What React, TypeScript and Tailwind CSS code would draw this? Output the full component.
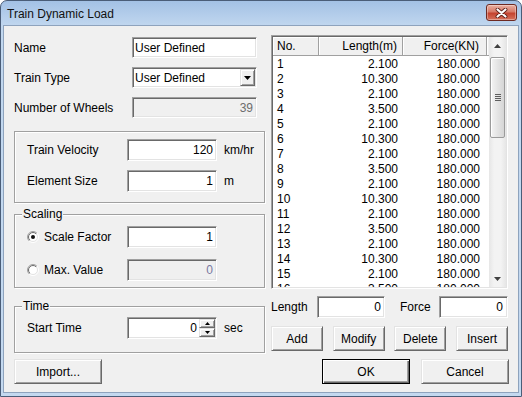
import React from "react";

const sunken =
  "border border-t-[#a0a0a0] border-l-[#a0a0a0] border-b-white border-r-white shadow-[inset_1px_1px_0_#696969,inset_-1px_-1px_0_#e3e3e3]";
const raised =
  "border border-t-[#e3e3e3] border-l-[#e3e3e3] border-b-[#696969] border-r-[#696969] shadow-[inset_1px_1px_0_#fff,inset_-1px_-1px_0_#a0a0a0] bg-[#f0f0f0]";
const etched = "border border-[#a0a0a0] shadow-[inset_1px_1px_0_#fff,1px_1px_0_#fff]";

const rows: [string, string][] = [
  ["1", "2.100"],
  ["2", "10.300"],
  ["3", "2.100"],
  ["4", "3.500"],
  ["5", "2.100"],
  ["6", "10.300"],
  ["7", "2.100"],
  ["8", "3.500"],
  ["9", "2.100"],
  ["10", "10.300"],
  ["11", "2.100"],
  ["12", "3.500"],
  ["13", "2.100"],
  ["14", "10.300"],
  ["15", "2.100"],
  ["16", "3.500"],
];

function Radio({ checked }: { checked: boolean }) {
  return (
    <svg width="12" height="12" viewBox="0 0 12 12" className="shrink-0">
      <defs>
        <linearGradient id="ro" x1="0" y1="0" x2="1" y2="1">
          <stop offset="0.5" stopColor="#a0a0a0" />
          <stop offset="0.5" stopColor="#ffffff" />
        </linearGradient>
        <linearGradient id="ri" x1="0" y1="0" x2="1" y2="1">
          <stop offset="0.5" stopColor="#696969" />
          <stop offset="0.5" stopColor="#e3e3e3" />
        </linearGradient>
      </defs>
      <circle cx="6" cy="6" r="5.5" fill="none" stroke="url(#ro)" strokeWidth="1" />
      <circle cx="6" cy="6" r="4.5" fill="#fff" stroke="url(#ri)" strokeWidth="1" />
      {checked && <circle cx="6" cy="6" r="2" fill="#111" />}
    </svg>
  );
}

function Tri({ down = true, color = "#000" }: { down?: boolean; color?: string }) {
  return (
    <svg width="7" height="4" viewBox="0 0 7 4">
      {down ? <polygon points="0,0 7,0 3.5,4" fill={color} /> : <polygon points="0,4 7,4 3.5,0" fill={color} />}
    </svg>
  );
}

function Btn({ children, w, def = false }: { children: React.ReactNode; w: string; def?: boolean }) {
  if (def) {
    return (
      <div
        className={`${w} h-[25px] border border-black bg-[#f0f0f0] shadow-[inset_1px_1px_0_#fff,inset_-1px_-1px_0_#696969,inset_-2px_-2px_0_#a0a0a0] flex items-center justify-center`}
      >
        {children}
      </div>
    );
  }
  return <div className={`${w} h-[25px] ${raised} flex items-center justify-center`}>{children}</div>;
}

function GroupRow({ label, value, unit }: { label: string; value: string; unit: string }) {
  return (
    <div className="flex items-center h-[22px]">
      <span className="w-[100px]">{label}</span>
      <div className={`w-[90px] h-[22px] bg-white ${sunken} flex items-center justify-end pr-[3px]`}>{value}</div>
      <span className="ml-[7px]">{unit}</span>
    </div>
  );
}

export default function App() {
  return (
    <div className="w-[522px] h-[397px] font-['Liberation_Sans',Arial,sans-serif] text-[12px] text-black leading-[14px]">
      <div className="w-full h-full flex flex-col rounded-t-[7px] border border-[#4a5d78] overflow-hidden bg-[linear-gradient(#a3c1e5,#c1d7ef_25px,#c4d9f0)]">
        {/* Title bar */}
        <div className="h-[24px] shrink-0 flex items-start pl-[6px] pr-[4px]">
          <span className="mt-[6px] text-[#111]">Train Dynamic Load</span>
          <div className="ml-auto mt-[3px] w-[31px] h-[17px] rounded-[3px] border border-[#6e2a22] bg-[linear-gradient(#eab0a2,#d67a68_45%,#c4432f_55%,#d5725c)] shadow-[inset_0_0_0_1px_rgba(255,255,255,0.35)] flex items-center justify-center">
            <svg width="13" height="10" viewBox="0 0 13 10">
              <path d="M2.5 1.5 L10.5 8.5 M10.5 1.5 L2.5 8.5" stroke="#5a1d16" strokeWidth="3.8" strokeLinecap="round" />
              <path d="M2.5 1.5 L10.5 8.5 M10.5 1.5 L2.5 8.5" stroke="#fff" strokeWidth="2.2" strokeLinecap="round" />
            </svg>
          </div>
        </div>

        {/* Client area */}
        <div className="flex-1 mx-[2px] mb-[3px] border border-[#8ea3bd] bg-[#f0f0f0] flex flex-col pl-[10px] pt-[9px]">
          <div className="flex items-start gap-[6px]">
            {/* Left column */}
            <div className="w-[251px] pt-[2px] flex flex-col">
              <div className="flex items-center h-[21px]">
                <span className="w-[118px]">Name</span>
                <div className={`w-[125px] h-[21px] bg-white ${sunken} flex items-center pl-[2px]`}>User Defined</div>
              </div>
              <div className="flex items-center h-[21px] mt-[9px]">
                <span className="w-[118px]">Train Type</span>
                <div className={`w-[125px] h-[21px] bg-white ${sunken} flex items-center pl-[2px]`}>
                  <span className="flex-1">User Defined</span>
                  <div className={`w-[15px] h-[17px] mr-[1px] ${raised} flex items-center justify-center`}>
                    <Tri />
                  </div>
                </div>
              </div>
              <div className="flex items-center h-[21px] mt-[9px]">
                <span className="w-[118px]">Number of Wheels</span>
                <div className={`w-[125px] h-[21px] bg-[#f0f0f0] ${sunken} flex items-center justify-end pr-[3px] text-[#6d6d6d]`}>
                  39
                </div>
              </div>

              <div className={`mt-[13px] h-[72px] ${etched} pl-[12px] pt-[7px] flex flex-col`}>
                <GroupRow label="Train Velocity" value="120" unit="km/hr" />
                <div className="h-[9px]" />
                <GroupRow label="Element Size" value="1" unit="m" />
              </div>

              <div className={`relative mt-[11px] h-[74px] ${etched} pl-[12px] pt-[11px] flex flex-col`}>
                <span className="absolute left-[7px] -top-[8px] px-[1px] bg-[#f0f0f0]">Scaling</span>
                <div className="flex items-center h-[22px]">
                  <div className="w-[100px] flex items-center">
                    <Radio checked />
                    <span className="ml-[5px]">Scale Factor</span>
                  </div>
                  <div className={`w-[90px] h-[22px] bg-white ${sunken} flex items-center justify-end pr-[3px]`}>1</div>
                </div>
                <div className="flex items-center h-[22px] mt-[11px]">
                  <div className="w-[100px] flex items-center">
                    <Radio checked={false} />
                    <span className="ml-[5px]">Max. Value</span>
                  </div>
                  <div className={`w-[90px] h-[22px] bg-[#f0f0f0] ${sunken} flex items-center justify-end pr-[3px] text-[#7878a0]`}>
                    0
                  </div>
                </div>
              </div>

              <div className={`relative mt-[18px] h-[47px] ${etched} pl-[12px] pt-[10px] flex flex-col`}>
                <span className="absolute left-[7px] -top-[8px] px-[1px] bg-[#f0f0f0]">Time</span>
                <div className="flex items-center h-[22px]">
                  <span className="w-[100px]">Start Time</span>
                  <div className={`w-[90px] h-[22px] bg-white ${sunken} flex items-center justify-end`}>
                    <span className="mr-[2px]">0</span>
                    <div className="flex flex-col w-[16px] h-[18px] mr-[1px]">
                      <div className={`h-[9px] ${raised} flex items-center justify-center`}>
                        <svg width="5" height="3" viewBox="0 0 5 3">
                          <polygon points="0,3 5,3 2.5,0" fill="#000" />
                        </svg>
                      </div>
                      <div className={`h-[9px] ${raised} flex items-center justify-center`}>
                        <svg width="5" height="3" viewBox="0 0 5 3">
                          <polygon points="0,0 5,0 2.5,3" fill="#000" />
                        </svg>
                      </div>
                    </div>
                  </div>
                  <span className="ml-[7px]">sec</span>
                </div>
              </div>
            </div>

            {/* Right column */}
            <div className="w-[237px] flex flex-col">
              <div className={`h-[254px] bg-white ${sunken} p-[1px] flex overflow-hidden`}>
                <div className="w-[216px] flex flex-col overflow-hidden">
                  <div className="h-[19px] shrink-0 flex bg-[#f0f0f0]">
                    <div className="w-[46px] h-full border-r border-b border-[#a0a0a0] shadow-[inset_1px_1px_0_#fff] flex items-center pl-[4px]">
                      No.
                    </div>
                    <div className="w-[84px] h-full border-r border-b border-[#a0a0a0] shadow-[inset_1px_1px_0_#fff] flex items-center justify-end pr-[5px]">
                      Length(m)
                    </div>
                    <div className="w-[84px] h-full border-r border-b border-[#a0a0a0] shadow-[inset_1px_1px_0_#fff] flex items-center justify-end pr-[7px]">
                      Force(KN)
                    </div>
                    <div className="flex-1 h-full border-b border-[#a0a0a0] shadow-[inset_1px_1px_0_#fff]" />
                  </div>
                  {rows.map(([n, l]) => (
                    <div key={n} className="h-[15px] shrink-0 flex items-center">
                      <span className="w-[46px] pl-[4px]">{n}</span>
                      <span className="w-[84px] text-right pr-[5px]">{l}</span>
                      <span className="w-[84px] text-right pr-[7px]">180.000</span>
                    </div>
                  ))}
                </div>
                {/* scrollbar */}
                <div className="w-[17px] flex flex-col bg-[linear-gradient(90deg,#e6e6e6,#f3f3f3_30%,#f3f3f3_70%,#e6e6e6)]">
                  <div className="h-[17px] flex items-center justify-center">
                    <Tri down={false} color="#404040" />
                  </div>
                  <div className="flex-1 relative">
                    <div className="mx-[1px] mt-[3px] h-[81px] rounded-[2px] border border-[#9b9b9b] bg-[linear-gradient(90deg,#f4f4f4,#e4e4e4_50%,#d6d6d6)] shadow-[inset_1px_1px_0_#fff] flex flex-col items-center justify-center gap-[1px]">
                      <div className="w-[6px] h-[1px] bg-[#5e5e5e]" />
                      <div className="w-[6px] h-[1px] bg-[#5e5e5e]" />
                      <div className="w-[6px] h-[1px] bg-[#5e5e5e]" />
                      <div className="w-[6px] h-[1px] bg-[#5e5e5e]" />
                    </div>
                  </div>
                  <div className="h-[17px] flex items-center justify-center">
                    <Tri color="#404040" />
                  </div>
                </div>
              </div>

              <div className="flex items-center h-[22px] mt-[7px]">
                <span className="w-[46px]">Length</span>
                <div className={`w-[68px] h-[22px] bg-white ${sunken} flex items-center justify-end pr-[3px]`}>0</div>
                <span className="ml-[15px] w-[39px]">Force</span>
                <div className={`w-[69px] h-[22px] bg-white ${sunken} flex items-center justify-end pr-[4px]`}>0</div>
              </div>

              <div className="flex justify-between mt-[8px]">
                <Btn w="w-[52px]">Add</Btn>
                <Btn w="w-[52px]">Modify</Btn>
                <Btn w="w-[52px]">Delete</Btn>
                <Btn w="w-[52px]">Insert</Btn>
              </div>
            </div>
          </div>

          {/* Bottom row */}
          <div className="w-[495px] flex mt-[6px]">
            <Btn w="w-[88px]">Import...</Btn>
            <div className="ml-auto flex gap-[11px]">
              <Btn w="w-[88px]" def>
                OK
              </Btn>
              <Btn w="w-[88px]">Cancel</Btn>
            </div>
          </div>
        </div>
      </div>
    </div>
  );
}
